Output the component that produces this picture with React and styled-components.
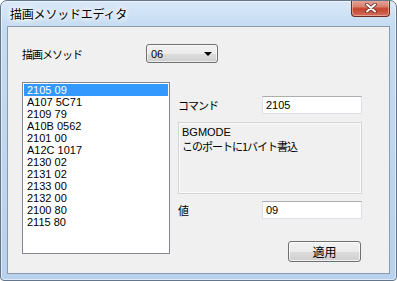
import React from 'react'
import styled, { createGlobalStyle } from 'styled-components'

const PageStyle = createGlobalStyle`
  html, body {
    margin: 0;
    padding: 0;
    background: #ffffff;
  }
  body {
    font-family: "Noto Sans CJK JP", "Liberation Sans", sans-serif;
    font-size: 12px;
    color: #000;
  }
`

const digits = `"Liberation Sans", "Noto Sans CJK JP", sans-serif`

const Window = styled.div`
  width: 397px;
  height: 281px;
  box-sizing: border-box;
  border: 1px solid #63768c;
  border-radius: 7px 7px 4px 4px;
  background: linear-gradient(180deg, #d9e8f8 0px, #c5dbf2 26px, #b8d1ec 100%);
  box-shadow: inset 0 0 0 1px rgba(255, 255, 255, 0.55);
  padding: 0 6px 6px 6px;
  display: flex;
  flex-direction: column;
  overflow: hidden;
`
const TitleBar = styled.div`
  height: 25px;
  display: flex;
  justify-content: space-between;
  align-items: flex-start;
`
const Title = styled.div`
  margin: 6px 0 0 3px;
  font-size: 12px;
  line-height: 14px;
  letter-spacing: -0.2px;
  color: #000;
  text-shadow: 0 0 4px #fff, 0 0 6px #fff, 0 0 8px #fff;
`
const CloseButton = styled.div`
  margin-top: -1px;
  width: 39px;
  height: 17px;
  box-sizing: border-box;
  border: 1px solid #6b2a22;
  border-top: none;
  border-radius: 0 0 4px 4px;
  background: linear-gradient(180deg, #e6a89d 0%, #d9826f 40%, #c5432e 55%, #d2705c 100%);
  box-shadow: inset 0 0 0 1px rgba(255, 220, 210, 0.45);
  display: flex;
  align-items: center;
  justify-content: center;
`

const Client = styled.div`
  flex: 1;
  box-sizing: border-box;
  border: 1px solid #8a9bb0;
  background: #f0f0f0;
  padding: 17px 0 0 14px;
`
const TopRow = styled.div`
  display: flex;
  align-items: center;
  height: 19px;
`
const Label = styled.div`
  width: ${(p) => p.$w}px;
  flex: none;
  font-size: 11px;
  letter-spacing: -1px;
  line-height: 14px;
`
const Combo = styled.div`
  width: 72px;
  height: 19px;
  box-sizing: border-box;
  border: 1px solid #707070;
  border-radius: 3px;
  background: linear-gradient(180deg, #f2f2f2 0%, #ebebeb 50%, #dddddd 51%, #cfcfcf 100%);
  box-shadow: inset 0 0 0 1px rgba(255, 255, 255, 0.6);
  display: flex;
  align-items: center;
  justify-content: space-between;
  padding: 0 5px 0 4px;
  font-family: ${digits};
  font-size: 11px;
  line-height: 14px;
`
const Arrow = styled.div`
  width: 0;
  height: 0;
  border-left: 4px solid transparent;
  border-right: 4px solid transparent;
  border-top: 4px solid #000;
`

const MainRow = styled.div`
  display: flex;
  gap: 8px;
  margin-top: 19px;
`
const ListBox = styled.div`
  width: 148px;
  height: 172px;
  box-sizing: border-box;
  border: 1px solid #828790;
  background: #fff;
  padding: 1px;
`
const ListItem = styled.div`
  height: 12px;
  line-height: 12px;
  padding-left: 3px;
  white-space: pre;
  font-family: ${digits};
  font-size: 11px;
  background: ${(p) => (p.$selected ? '#3399ff' : 'transparent')};
  color: ${(p) => (p.$selected ? '#fff' : '#000')};
`

const RightCol = styled.div`
  width: 184px;
  display: flex;
  flex-direction: column;
`
const FieldRow = styled.div`
  display: flex;
  align-items: center;
  margin-top: ${(p) => p.$top}px;
`
const TextBox = styled.div`
  width: 100px;
  height: 18px;
  box-sizing: border-box;
  border: 1px solid #dbdfe6;
  border-top-color: #abadb3;
  background: #fff;
  padding-left: 3px;
  font-family: ${digits};
  font-size: 11px;
  line-height: 16px;
`
const DescBox = styled.div`
  margin-top: 8px;
  height: 72px;
  box-sizing: border-box;
  border: 1px solid #d3d3d3;
  box-shadow: inset 0 0 0 1px #fbfbfb;
  background: #f0f0f0;
  padding: 3px 3px;
`
const DescName = styled.div`
  font-family: ${digits};
  font-size: 11px;
  line-height: 13px;
`
const DescText = styled.div`
  margin-top: 1px;
  font-size: 11px;
  letter-spacing: -1px;
  line-height: 13px;
`
const ButtonRow = styled.div`
  display: flex;
  justify-content: flex-end;
  margin-top: 22px;
  padding-right: 1px;
`
const Button = styled.div`
  width: 73px;
  height: 21px;
  box-sizing: border-box;
  border: 1px solid #707070;
  border-radius: 3px;
  background: linear-gradient(180deg, #f2f2f2 0%, #ebebeb 50%, #dddddd 51%, #cfcfcf 100%);
  box-shadow: inset 0 0 0 1px rgba(255, 255, 255, 0.7);
  display: flex;
  align-items: center;
  justify-content: center;
  font-size: 12px;
  line-height: 14px;
`

const items = [
  '2105 09',
  'A107 5C71',
  '2109 79',
  'A10B 0562',
  '2101 00',
  'A12C 1017',
  '2130 02',
  '2131 02',
  '2133 00',
  '2132 00',
  '2100 80',
  '2115 80',
]

const CloseIcon = () => (
  <svg width='12' height='10' viewBox='0 0 12 10'>
    <path d='M2 1.5 L10 8.5 M10 1.5 L2 8.5' stroke='#5a2a25' strokeWidth='3.6' strokeLinecap='round' />
    <path d='M2 1.5 L10 8.5 M10 1.5 L2 8.5' stroke='#ffffff' strokeWidth='2' strokeLinecap='round' />
  </svg>
)

const App = () => (
  <Window>
    <PageStyle />
    <TitleBar>
      <Title>描画メソッドエディタ</Title>
      <CloseButton>
        <CloseIcon />
      </CloseButton>
    </TitleBar>
    <Client>
      <TopRow>
        <Label $w={124}>描画メソッド</Label>
        <Combo>
          <span>06</span>
          <Arrow />
        </Combo>
      </TopRow>
      <MainRow>
        <ListBox>
          {items.map((t, i) => (
            <ListItem key={t} $selected={i === 0}>{t}</ListItem>
          ))}
        </ListBox>
        <RightCol>
          <FieldRow $top={14}>
            <Label $w={84}>コマンド</Label>
            <TextBox>2105</TextBox>
          </FieldRow>
          <DescBox>
            <DescName>BGMODE</DescName>
            <DescText>このポートに1バイト書込</DescText>
          </DescBox>
          <FieldRow $top={7}>
            <Label $w={84}>値</Label>
            <TextBox>09</TextBox>
          </FieldRow>
          <ButtonRow>
            <Button>適用</Button>
          </ButtonRow>
        </RightCol>
      </MainRow>
    </Client>
  </Window>
)

export default App
